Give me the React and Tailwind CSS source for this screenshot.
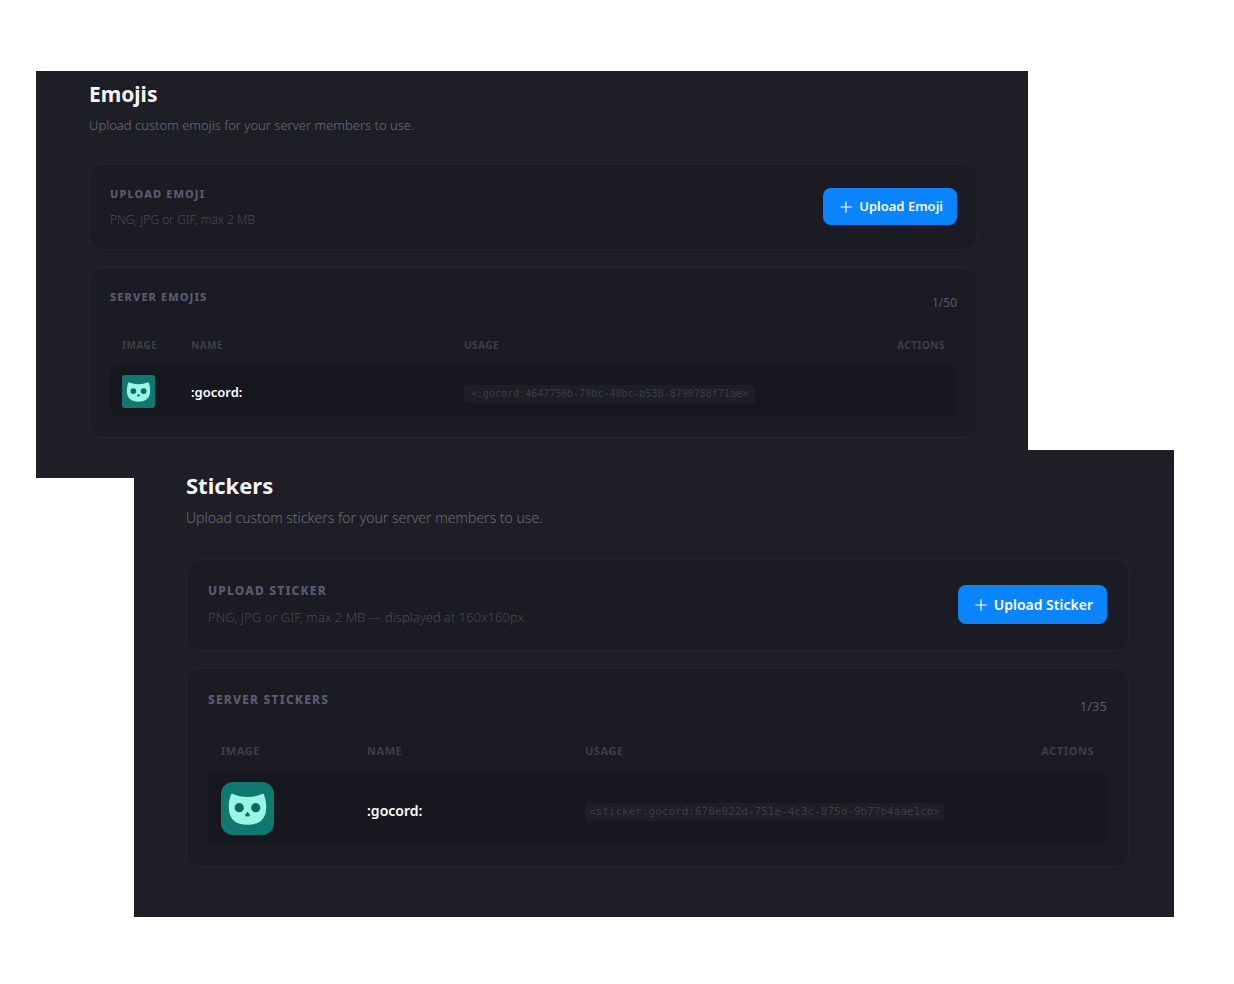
import { Plus } from "lucide-react";

function CatLogo({ className }) {
  return (
    <svg viewBox="0 0 54 54" className={className} role="img" aria-label="gocord">
      <rect width="54" height="54" fill="#11786f" />
      <path
        d="M12.4 12.2 Q18.5 15.2 27 15.2 Q35.5 15.2 41.6 12.2 C42.9 11.7 43.6 12.2 44 13.4 C45.4 17 46.2 21.5 46 27 C45.6 38 39 43.6 27 43.6 C15 43.6 8.4 38 8 27 C7.8 21.5 8.6 17 10 13.4 C10.4 12.2 11.1 11.7 12.4 12.2 Z"
        fill="#99f6e4"
      />
      <circle cx="18.6" cy="26.2" r="4.7" fill="#11665f" />
      <circle cx="35.4" cy="26.2" r="4.7" fill="#11665f" />
      <path
        d="M27 30.6 C27.9 31.6 29.3 32.6 29.3 33.8 C29.3 35 28 35.6 27 34.8 C26 35.6 24.7 35 24.7 33.8 C24.7 32.6 26.1 31.6 27 30.6 Z"
        fill="#11665f"
      />
    </svg>
  );
}

const emojis = {
  title: "Emojis",
  description: "Upload custom emojis for your server members to use.",
  uploadTitle: "Upload Emoji",
  hint: "PNG, JPG or GIF, max 2 MB",
  listTitle: "Server Emojis",
  count: "1/50",
  usage: "<:gocord:4647750b-70bc-40bc-b530-8790788f71ae>",
  s: {
    panel: "mr-[146px] pt-[7px] pb-10 pl-[53px] pr-[50px]",
    title: "text-[21px] leading-8",
    description: "mt-[5px] text-[13px] leading-5",
    cards: "mt-[29px] gap-[17px]",
    card: "px-5",
    upload: "pt-[21px] pb-[19px]",
    heading: "text-[11px] leading-4",
    hint: "mt-2 text-[12px] leading-5",
    button: "h-[37px] text-[13px]",
    list: "py-[21px]",
    count: "text-[12px]",
    head: "text-[10px] h-[41px]",
    cell: "px-3",
    table: "mt-[10px]",
    image: "w-[69px]",
    name: "w-[273px]",
    row: "h-[50px]",
    icon: "size-[33px] rounded-[3px]",
    label: "text-[13px]",
    code: "text-[10px] px-[7px]",
  },
};

const stickers = {
  title: "Stickers",
  description: "Upload custom stickers for your server members to use.",
  uploadTitle: "Upload Sticker",
  hint: "PNG, JPG or GIF, max 2 MB — displayed at 160x160px",
  listTitle: "Server Stickers",
  count: "1/35",
  usage: "<sticker:gocord:678e022d-751e-4c3c-875d-9b77b4aae1cb>",
  s: {
    panel: "relative -mt-7 ml-[98px] pt-[19px] pb-[50px] pl-[52px] pr-[45px]",
    title: "text-[22px] leading-8",
    description: "mt-[5px] text-[14px] leading-6",
    cards: "mt-[29px] gap-[17px]",
    card: "px-[21px]",
    upload: "py-[23px]",
    heading: "text-[12px] leading-4",
    hint: "mt-2 text-[13px] leading-5",
    button: "h-[39px] text-[14px]",
    list: "pt-[23px] pb-[22px]",
    count: "text-[13px]",
    head: "text-[11px] h-11",
    cell: "px-[13px]",
    table: "mt-[11px]",
    image: "w-[146px]",
    name: "w-[218px]",
    row: "h-[71px]",
    icon: "size-[53px] rounded-[12px]",
    label: "text-[14px]",
    code: "text-[11px] px-1",
  },
};

function Heading({ className, children }) {
  return <h2 className={`font-extrabold uppercase tracking-widest text-[#5b5a6e] ${className}`}>{children}</h2>;
}

function AssetPanel({ data }) {
  const { s } = data;
  const card = `rounded-[13px] border border-[#24242d] bg-[#1b1b23] ${s.card}`;
  return (
    <section className={`bg-[#1e1e27] ${s.panel}`}>
      <h1 className={`font-bold text-[#f5f5f7] ${s.title}`}>{data.title}</h1>
      <p className={`font-light text-[#6c6c7b] ${s.description}`}>{data.description}</p>

      <div className={`flex flex-col ${s.cards}`}>
        <div className={`flex items-start justify-between ${card} ${s.upload}`}>
          <div>
            <Heading className={s.heading}>{data.uploadTitle}</Heading>
            <p className={`font-light text-[#4a4a56] ${s.hint}`}>{data.hint}</p>
          </div>
          <button
            type="button"
            className={`mt-0.5 flex items-center gap-1 whitespace-nowrap rounded-lg bg-[#0a84ff] px-3.5 font-semibold text-white ${s.button}`}
          >
            <Plus className="size-[18px]" strokeWidth={1.6} aria-hidden="true" />
            {data.uploadTitle}
          </button>
        </div>

        <div className={`${card} ${s.list}`}>
          <div className="flex items-start justify-between">
            <Heading className={s.heading}>{data.listTitle}</Heading>
            <span className={`mt-0.5 leading-6 text-[#5a5a6d] ${s.count}`}>{data.count}</span>
          </div>
          <table className={`w-full table-fixed border-separate border-spacing-0 text-left ${s.table}`}>
            <thead>
              <tr className={`uppercase tracking-wider text-[#3e3e49] ${s.head}`}>
                <th scope="col" className={`font-bold ${s.cell} ${s.image}`}>Image</th>
                <th scope="col" className={`font-bold ${s.cell} ${s.name}`}>Name</th>
                <th scope="col" className={`font-bold ${s.cell}`}>Usage</th>
                <th scope="col" className={`w-28 text-right font-bold ${s.cell}`}>Actions</th>
              </tr>
            </thead>
            <tbody>
              <tr className={s.row}>
                <td className={`rounded-l-lg bg-[#17171f] ${s.cell}`}>
                  <CatLogo className={s.icon} />
                </td>
                <td className={`bg-[#17171f] pt-1 font-semibold text-white ${s.cell} ${s.label}`}>:gocord:</td>
                <td className={`bg-[#17171f] ${s.cell}`}>
                  <code
                    className={`inline-block whitespace-nowrap rounded bg-[#1e1e27] font-['DejaVu_Sans_Mono',monospace] leading-[18px] text-[#3c3c48] ${s.code}`}
                  >
                    {data.usage}
                  </code>
                </td>
                <td className="rounded-r-lg bg-[#17171f]" />
              </tr>
            </tbody>
          </table>
        </div>
      </div>
    </section>
  );
}

export default function App() {
  return (
    <main className="min-h-screen bg-white pt-[71px] pr-[60px] pb-16 pl-9 font-['Noto_Sans','Open_Sans',sans-serif]">
      <AssetPanel data={emojis} />
      <AssetPanel data={stickers} />
    </main>
  );
}
